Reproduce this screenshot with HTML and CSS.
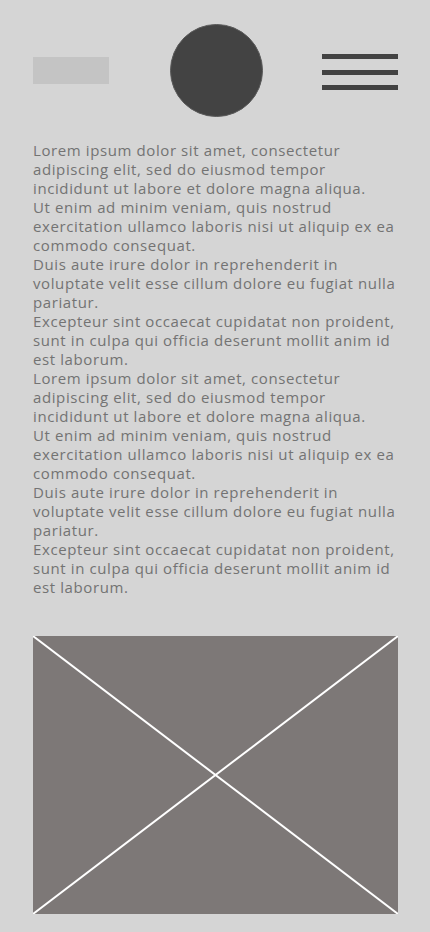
FILE: index.html
```html
<!DOCTYPE html>
<html lang="en">
<head>
<meta charset="utf-8">
<title>Wireframe</title>
<link rel="stylesheet" href="styles.css">
</head>
<body>
<div class="page">
  <header class="header">
    <div class="logo"></div>
    <div class="avatar"></div>
    <div class="menu">
      <span class="bar"></span>
      <span class="bar"></span>
      <span class="bar"></span>
    </div>
  </header>
  <main class="content">
    <p>Lorem ipsum dolor sit amet, consectetur adipiscing elit, sed do eiusmod tempor incididunt ut labore et dolore magna aliqua.</p>
    <p>Ut enim ad minim veniam, quis nostrud exercitation ullamco laboris nisi ut aliquip ex ea commodo consequat.</p>
    <p>Duis aute irure dolor in reprehenderit in voluptate velit esse cillum dolore eu fugiat nulla pariatur.</p>
    <p>Excepteur sint occaecat cupidatat non proident, sunt in culpa qui officia deserunt mollit anim id est laborum.</p>
    <p>Lorem ipsum dolor sit amet, consectetur adipiscing elit, sed do eiusmod tempor incididunt ut labore et dolore magna aliqua.</p>
    <p>Ut enim ad minim veniam, quis nostrud exercitation ullamco laboris nisi ut aliquip ex ea commodo consequat.</p>
    <p>Duis aute irure dolor in reprehenderit in voluptate velit esse cillum dolore eu fugiat nulla pariatur.</p>
    <p>Excepteur sint occaecat cupidatat non proident, sunt in culpa qui officia deserunt mollit anim id est laborum.</p>
  </main>
  <div class="image">
    <svg class="cross" viewBox="0 0 365 278" preserveAspectRatio="none">
      <line x1="0" y1="0" x2="365" y2="278"/>
      <line x1="365" y1="0" x2="0" y2="278"/>
    </svg>
  </div>
</div>
</body>
</html>
```
FILE: styles.css
```css
html, body {
  margin: 0;
  padding: 0;
  background: #d5d5d5;
}
.page {
  width: 430px;
  min-height: 932px;
  box-sizing: border-box;
  padding: 24px 32px 0 33px;
  font-family: "Open Sans", sans-serif;
}
.header {
  display: flex;
  align-items: center;
  justify-content: space-between;
  height: 93px;
}
.logo {
  width: 76px;
  height: 27px;
  background: #c4c4c4;
}
.avatar {
  width: 93px;
  height: 93px;
  box-sizing: border-box;
  border-radius: 50%;
  background: #434343;
  border: 1px solid #5a5a5a;
  margin-left: 1px;
}
.menu {
  width: 76px;
  display: flex;
  flex-direction: column;
  gap: 10.5px;
  margin-top: 3px;
}
.bar {
  display: block;
  height: 5px;
  background: #434343;
}
.content {
  margin-top: 24px;
  color: #737373;
  font-size: 15px;
  line-height: 19px;
  letter-spacing: 0.6px;
}
.content p {
  margin: 0;
}
.image {
  margin-top: 39px;
  width: 365px;
  height: 278px;
  background: #7d7877;
}
.cross {
  display: block;
  width: 100%;
  height: 100%;
}
.cross line {
  stroke: #ffffff;
  stroke-width: 2;
}
```
